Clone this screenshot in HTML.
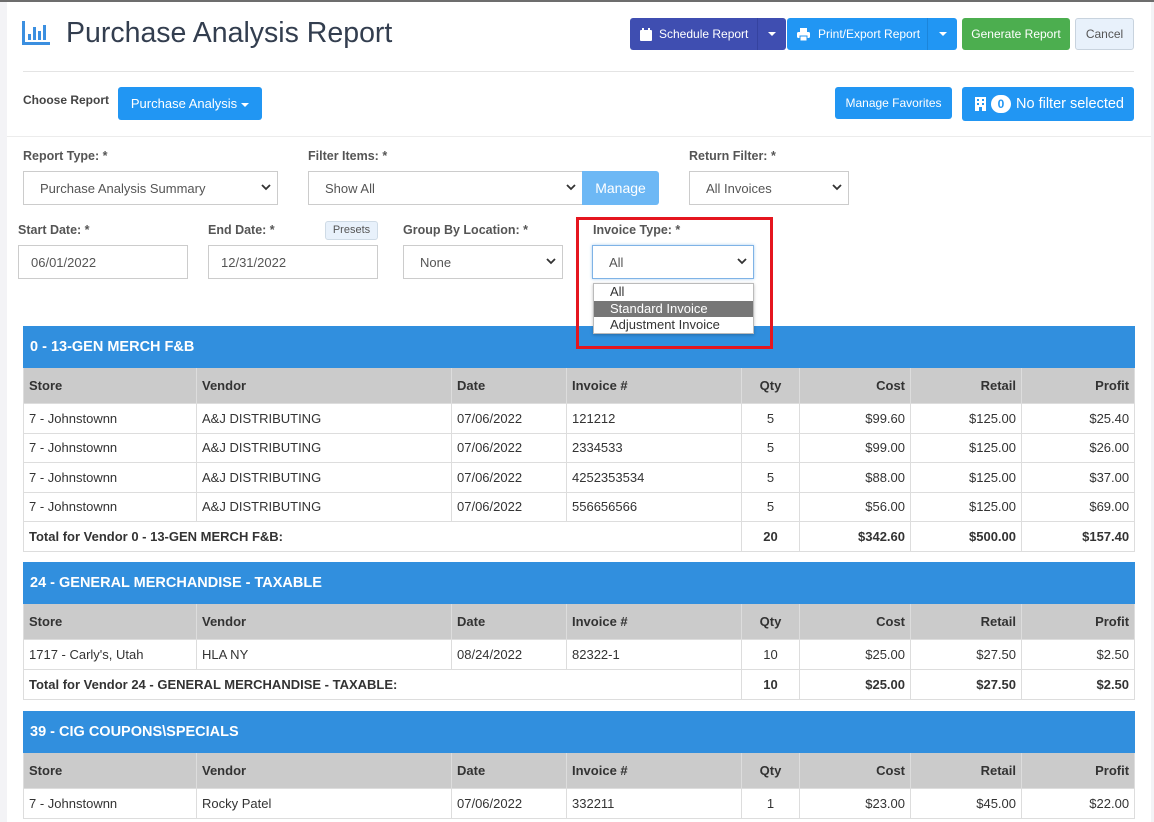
<!DOCTYPE html>
<html style="overflow:hidden;height:822px"><head><meta charset="utf-8"><style>
*{box-sizing:border-box;margin:0;padding:0}
body{width:1154px;height:822px;overflow:hidden;background:#f3f3f6;font-family:"Liberation Sans",sans-serif;font-size:13px;color:#333;position:relative}
.panel{position:absolute;left:7px;top:2px;width:1144px;height:820px;background:#fff}
.topline{position:absolute;left:0;top:0;width:1154px;height:2px;background:#6d6d6d}
.a{position:absolute}
.btn{position:absolute;color:#fff;border-radius:3px;font-size:12.5px;display:flex;align-items:center;justify-content:center;white-space:nowrap}
.lbl{position:absolute;font-size:12.5px;font-weight:bold;color:#555}
.sel{position:absolute;border:1px solid #ccc;background:#fff;font-size:13px;color:#555;display:flex;align-items:center;padding-left:16px}
.sel svg{position:absolute;right:6px;top:50%;margin-top:-4px}
.hr{position:absolute;height:1px;background:#e4e4e4}
table{position:absolute;left:23px;width:1111px;border-collapse:collapse;table-layout:fixed}
td{border:1px solid #ddd;padding:0 5px;font-size:13px;color:#333;white-space:nowrap;overflow:hidden;text-align:left}
tr.h td{background:#318fde;color:#fff;font-weight:bold;font-size:14.5px;border-color:#318fde;height:41px;padding-left:6px}
tr.c td{background:#cbcbcb;font-weight:bold;color:#333;height:36px;border-color:#ddd}
tr.rw td{height:29.5px}
tr.t td{font-weight:bold;height:30px}
td.rt{text-align:right}td.m{text-align:center}
</style></head><body>
<div class="topline"></div>
<div class="panel"></div>
<svg class="a" style="left:22px;top:21px" width="28" height="24" viewBox="0 0 28 24"><rect x="0" y="0" width="3" height="24" fill="#3b8fe0"/><rect x="0" y="21" width="28" height="3" fill="#3b8fe0"/><rect x="6" y="13" width="3" height="6" fill="#3b8fe0"/><rect x="11" y="6" width="3" height="13" fill="#3b8fe0"/><rect x="16" y="10" width="3" height="9" fill="#3b8fe0"/><rect x="21" y="4" width="3" height="15" fill="#3b8fe0"/></svg>
<div class="a" style="left:66px;top:17px;font-size:28.5px;color:#333e4f;white-space:nowrap">Purchase Analysis Report</div>
<div class="btn" style="left:630px;top:18px;width:156px;height:32px;background:#3f4eb1;justify-content:flex-start;padding-left:10px;font-size:12px">
<svg width="12" height="13" viewBox="0 0 12 13"><rect x="0" y="2" width="12" height="11" rx="1" fill="#fff"/><rect x="2" y="0" width="2" height="3" fill="#fff"/><rect x="8" y="0" width="2" height="3" fill="#fff"/></svg><span style="margin-left:7px">Schedule Report</span>
<span style="position:absolute;left:127px;top:0;width:1px;height:32px;background:#3543a0"></span><span style="position:absolute;right:10px;top:14px;border:4px solid transparent;border-top:4px solid #fff;border-bottom:0"></span></div>
<div class="btn" style="left:787px;top:18px;width:170px;height:32px;background:#2196f3;justify-content:flex-start;padding-left:10px;font-size:12px">
<svg width="13" height="13" viewBox="0 0 13 13"><rect x="3" y="0" width="7" height="4" fill="#fff"/><rect x="0" y="4" width="13" height="6" rx="1.5" fill="#fff"/><rect x="3" y="8" width="7" height="5" fill="#fff" stroke="#2196f3" stroke-width="1"/></svg><span style="margin-left:8px">Print/Export Report</span>
<span style="position:absolute;left:140px;top:0;width:1px;height:32px;background:#1b85db"></span><span style="position:absolute;right:10px;top:14px;border:4px solid transparent;border-top:4px solid #fff;border-bottom:0"></span></div>
<div class="btn" style="left:962px;top:18px;width:108px;height:32px;background:#4cae4f;font-size:12px">Generate Report</div>
<div class="btn" style="left:1075px;top:18px;width:59px;height:32px;background:#e8f1fb;border:1px solid #c8d3de;color:#555;font-size:12px">Cancel</div>
<div class="hr" style="left:23px;top:71px;width:1111px"></div>
<div class="lbl" style="left:23px;top:93px;font-size:12px;color:#444">Choose Report</div>
<div class="btn" style="left:118px;top:87px;width:144px;height:33px;background:#2196f3;font-size:13px">Purchase Analysis<span style="margin-left:4px;border:4px solid transparent;border-top:4px solid #fff;border-bottom:0;margin-top:2px"></span></div>
<div class="btn" style="left:835px;top:87px;width:117px;height:32px;background:#2196f3;font-size:12px">Manage Favorites</div>
<div class="btn" style="left:962px;top:87px;width:172px;height:34px;background:#2196f3;font-size:14.5px;justify-content:flex-start;padding-left:13px">
<svg width="11" height="14" viewBox="0 0 11 14"><rect x="0" y="0" width="11" height="14" fill="#fff"/><rect x="2" y="2" width="2" height="2" fill="#2196f3"/><rect x="7" y="2" width="2" height="2" fill="#2196f3"/><rect x="2" y="6" width="2" height="2" fill="#2196f3"/><rect x="7" y="6" width="2" height="2" fill="#2196f3"/><rect x="4" y="10" width="3" height="4" fill="#2196f3"/></svg>
<span style="margin-left:5px;width:20px;height:18px;border-radius:9px;background:#fff;color:#2196f3;font-weight:bold;font-size:12px;display:flex;align-items:center;justify-content:center">0</span><span style="margin-left:5px">No filter selected</span></div>
<div class="hr" style="left:7px;top:136px;width:1144px;background:#ececec"></div>
<div class="lbl" style="left:23px;top:149px">Report Type: *</div>
<div class="sel" style="left:23px;top:171px;width:255px;height:34px">Purchase Analysis Summary<svg width="10" height="7" viewBox="0 0 10 7"><path d="M1 1l4 4 4-4" stroke="#333" stroke-width="1.8" fill="none"/></svg></div>
<div class="lbl" style="left:308px;top:149px">Filter Items: *</div>
<div class="sel" style="left:308px;top:171px;width:275px;height:34px">Show All<svg width="10" height="7" viewBox="0 0 10 7"><path d="M1 1l4 4 4-4" stroke="#333" stroke-width="1.8" fill="none"/></svg></div>
<div class="btn" style="left:582px;top:171px;width:77px;height:34px;background:#6db8f5;font-size:14px;border-radius:0 3px 3px 0">Manage</div>
<div class="lbl" style="left:689px;top:149px">Return Filter: *</div>
<div class="sel" style="left:689px;top:171px;width:160px;height:34px">All Invoices<svg width="10" height="7" viewBox="0 0 10 7"><path d="M1 1l4 4 4-4" stroke="#333" stroke-width="1.8" fill="none"/></svg></div>
<div class="lbl" style="left:18px;top:223px">Start Date: *</div>
<div class="sel" style="left:18px;top:245px;width:170px;height:34px;padding-left:12px">06/01/2022</div>
<div class="lbl" style="left:208px;top:223px">End Date: *</div>
<div class="a" style="left:325px;top:221px;width:53px;height:19px;background:#e8f1fb;border:1px solid #cfdbe6;border-radius:3px;font-size:11px;color:#555;text-align:center;line-height:17px">Presets</div>
<div class="sel" style="left:208px;top:245px;width:170px;height:34px;padding-left:12px">12/31/2022</div>
<div class="lbl" style="left:403px;top:223px">Group By Location: *</div>
<div class="sel" style="left:403px;top:245px;width:160px;height:34px;padding-left:16px">None<svg width="10" height="7" viewBox="0 0 10 7"><path d="M1 1l4 4 4-4" stroke="#333" stroke-width="1.8" fill="none"/></svg></div>
<div class="lbl" style="left:593px;top:223px">Invoice Type: *</div>
<div class="sel" style="left:592px;top:245px;width:162px;height:34px;border-color:#7fb3e6;box-shadow:0 0 3px #a8cdf0">All<svg width="10" height="7" viewBox="0 0 10 7"><path d="M1 1l4 4 4-4" stroke="#333" stroke-width="1.8" fill="none"/></svg></div>
<table style="top:326px">
<colgroup><col style="width:173px"><col style="width:255px"><col style="width:115px"><col style="width:175px"><col style="width:58px"><col style="width:111px"><col style="width:111px"><col style="width:113px"></colgroup>
<tr class="h"><td colspan="8">0 - 13-GEN MERCH F&amp;B</td></tr>
<tr class="c"><td>Store</td><td>Vendor</td><td>Date</td><td>Invoice #</td><td class="m">Qty</td><td class="rt">Cost</td><td class="rt">Retail</td><td class="rt">Profit</td></tr>
<tr class="rw"><td>7 - Johnstownn</td><td>A&amp;J DISTRIBUTING</td><td>07/06/2022</td><td>121212</td><td class="m">5</td><td class="rt">$99.60</td><td class="rt">$125.00</td><td class="rt">$25.40</td></tr>
<tr class="rw"><td>7 - Johnstownn</td><td>A&amp;J DISTRIBUTING</td><td>07/06/2022</td><td>2334533</td><td class="m">5</td><td class="rt">$99.00</td><td class="rt">$125.00</td><td class="rt">$26.00</td></tr>
<tr class="rw"><td>7 - Johnstownn</td><td>A&amp;J DISTRIBUTING</td><td>07/06/2022</td><td>4252353534</td><td class="m">5</td><td class="rt">$88.00</td><td class="rt">$125.00</td><td class="rt">$37.00</td></tr>
<tr class="rw"><td>7 - Johnstownn</td><td>A&amp;J DISTRIBUTING</td><td>07/06/2022</td><td>556656566</td><td class="m">5</td><td class="rt">$56.00</td><td class="rt">$125.00</td><td class="rt">$69.00</td></tr>
<tr class="t"><td colspan="4">Total for Vendor 0 - 13-GEN MERCH F&amp;B:</td><td class="m">20</td><td class="rt">$342.60</td><td class="rt">$500.00</td><td class="rt">$157.40</td></tr>
</table>
<table style="top:562px">
<colgroup><col style="width:173px"><col style="width:255px"><col style="width:115px"><col style="width:175px"><col style="width:58px"><col style="width:111px"><col style="width:111px"><col style="width:113px"></colgroup>
<tr class="h"><td colspan="8">24 - GENERAL MERCHANDISE - TAXABLE</td></tr>
<tr class="c"><td>Store</td><td>Vendor</td><td>Date</td><td>Invoice #</td><td class="m">Qty</td><td class="rt">Cost</td><td class="rt">Retail</td><td class="rt">Profit</td></tr>
<tr class="rw"><td>1717 - Carly's, Utah</td><td>HLA NY</td><td>08/24/2022</td><td>82322-1</td><td class="m">10</td><td class="rt">$25.00</td><td class="rt">$27.50</td><td class="rt">$2.50</td></tr>
<tr class="t"><td colspan="4">Total for Vendor 24 - GENERAL MERCHANDISE - TAXABLE:</td><td class="m">10</td><td class="rt">$25.00</td><td class="rt">$27.50</td><td class="rt">$2.50</td></tr>
</table>
<table style="top:711px">
<colgroup><col style="width:173px"><col style="width:255px"><col style="width:115px"><col style="width:175px"><col style="width:58px"><col style="width:111px"><col style="width:111px"><col style="width:113px"></colgroup>
<tr class="h"><td colspan="8">39 - CIG COUPONS\SPECIALS</td></tr>
<tr class="c"><td>Store</td><td>Vendor</td><td>Date</td><td>Invoice #</td><td class="m">Qty</td><td class="rt">Cost</td><td class="rt">Retail</td><td class="rt">Profit</td></tr>
<tr class="rw"><td>7 - Johnstownn</td><td>Rocky Patel</td><td>07/06/2022</td><td>332211</td><td class="m">1</td><td class="rt">$23.00</td><td class="rt">$45.00</td><td class="rt">$22.00</td></tr>
</table>
<div class="a" style="left:593px;top:283px;width:161px;height:51px;background:#fff;border:1px solid #bbb;box-shadow:0 1px 3px rgba(0,0,0,.25);font-size:13px;color:#333;line-height:16.5px">
<div style="padding-left:16px">All</div>
<div style="padding-left:16px;background:#777;color:#fff">Standard Invoice</div>
<div style="padding-left:16px">Adjustment Invoice</div></div>
<div class="a" style="left:576px;top:217px;width:197px;height:132px;border:3px solid #e5161f"></div>
</body></html>
